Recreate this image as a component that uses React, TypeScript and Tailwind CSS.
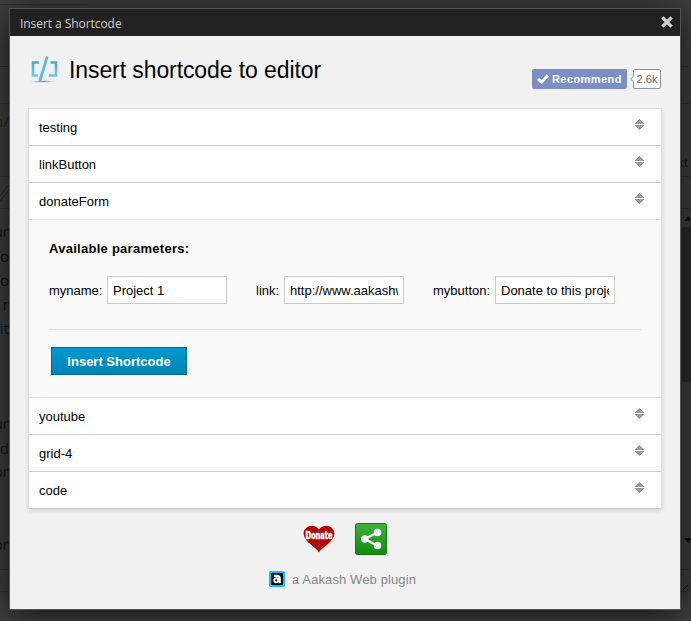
import React from "react";

const SANS = "font-['Liberation_Sans',Arial,sans-serif]";

function SortIcon() {
  return (
    <svg width="9" height="11" viewBox="0 0 9 11" className="mt-[10px] mr-[17px]" fill="#999" shapeRendering="crispEdges">
      <path d="M4 0h1v1h1v1h1v1h1v1h1v1H0V4h1V3h1V2h1V1h1zM0 6h9v1H8v1H7v1H6v1H5v1H4v-1H3V9H2V8H1V7H0z" />
    </svg>
  );
}

function Row({ name, open }: { name: string; open?: boolean }) {
  return (
    <div className={`flex h-[37px] items-start justify-between border-b bg-white pl-[10px] ${open ? "border-[#dfdfdf]" : "border-[#ccc]"}`}>
      <span className="text-[13px] leading-[37px] text-black">{name}</span>
      <SortIcon />
    </div>
  );
}

function Field({ label, value, labelWidth }: { label: string; value: string; labelWidth: string }) {
  return (
    <label className="flex items-center text-[13px] text-black">
      <span className={`${labelWidth} pt-[2px] whitespace-nowrap`}>{label}</span>
      <input readOnly value={value} className="h-7 w-[120px] border border-[#ccc] bg-white px-[5px] text-[13px] text-black outline-none" />
    </label>
  );
}

const LEFT_WORDS = [
  { text: "n/", top: "top-[109px]", color: "text-[#29240f]" },
  { text: "ur", top: "top-[219px]", color: "text-[#141414]" },
  { text: "o", top: "top-[244px]", color: "text-[#141414]" },
  { text: "do", top: "top-[268px]", color: "text-[#141414]" },
  { text: "r", top: "top-[292px]", color: "text-[#141414]" },
  { text: "it", top: "top-[316px]", color: "text-[#0d1c29]" },
  { text: "ur", top: "top-[411px]", color: "text-[#141414]" },
  { text: "d", top: "top-[436px]", color: "text-[#0d1c29]" },
  { text: "or", top: "top-[459px]", color: "text-[#141414]" },
  { text: "or", top: "top-[532px]", color: "text-[#141414]" },
];

function Backdrop() {
  return (
    <div className="absolute inset-0 overflow-hidden bg-[#3f3f3f] font-['Open_Sans',sans-serif]">
      <div className="absolute top-[4px] left-0 h-px w-[87px] bg-[#333]" />
      <div className="absolute top-[66px] left-0 h-px w-full bg-[#2f2f2f]" />
      <div className="absolute top-[103px] left-0 h-px w-full bg-[#2f2f2f]" />
      <div className="absolute top-[176px] left-0 h-[33px] w-full border-y border-[#2f2f2f]" />
      <div className="absolute top-[569px] left-0 h-[23px] w-full border-y border-[#333]" />
      <svg className="absolute top-[184px] left-0" width="10" height="18" stroke="#282828" fill="none"><path d="M0 12 7 3q2-2 3 0M0 17 9 6" /></svg>
      {LEFT_WORDS.map((w, i) => (
        <span key={i} className={`absolute right-[682px] text-[15px] leading-6 ${w.top} ${w.color}`}>{w.text}</span>
      ))}
      <span className="absolute top-[150px] left-[677px] text-[13px] leading-6 text-[#141414]">xt</span>
      <div className="absolute top-[227px] right-0 h-[155px] w-[9px] bg-[#2a2a2a]" />
      <svg className="absolute top-[216px] left-[684px]" width="8" height="5" fill="#111"><path d="M0 5 4 0l4 5z" /></svg>
      <svg className="absolute top-[538px] left-[684px]" width="8" height="5" fill="#050505"><path d="M0 0h8L4 5z" /></svg>
      <svg className="absolute top-[582px] left-[683px]" width="8" height="9" stroke="#202020" fill="none"><path d="M0 8 8 0M4 8l4-4" /></svg>
    </div>
  );
}

function Header() {
  return (
    <div className="flex h-[27px] items-center justify-between bg-[#222] pr-[7px] pl-[10px]">
      <span className="pt-[2px] font-['Open_Sans',sans-serif] text-[12px] leading-[27px] tracking-[-0.06px] text-[#cfcfcf]">Insert a Shortcode</span>
      <svg width="12" height="12" viewBox="0 0 12 12" stroke="#cfcfcf" strokeWidth="3.4" className="-mt-px">
        <path d="M1.4 1.4 10.6 10.6M10.6 1.4 1.4 10.6" />
      </svg>
    </div>
  );
}

function BracketLogo() {
  return (
    <svg width="30" height="30" viewBox="0 0 30 30" fill="none" className="ml-px">
      <defs>
        <linearGradient id="bracket" x1="0" y1="0" x2="0" y2="1">
          <stop offset="0" stopColor="#49a9d6" />
          <stop offset="1" stopColor="#6ac5ef" />
        </linearGradient>
        <radialGradient id="ground">
          <stop offset="0" stopColor="#888" />
          <stop offset="1" stopColor="#888" stopOpacity="0" />
        </radialGradient>
      </defs>
      <ellipse cx="14" cy="26.5" rx="13" ry="1.300" fill="url(#ground)" />
      <path d="M9.800 7.500H4V20.500H8.800M21.500 7.500h5.500V20.500H20" stroke="url(#bracket)" strokeWidth="2.600" />
      <path d="M18.300 1.500 10.800 26" stroke="#5bb9e4" strokeWidth="2.700" />
    </svg>
  );
}

function Recommend() {
  return (
    <div className="mt-[33px] flex h-5 items-center">
      <div className="flex h-5 w-[95px] items-center rounded-[2px] bg-[#7b8ec6] pl-[5px]">
        <svg width="12" height="10" viewBox="0 0 12 10" fill="none" stroke="#fff" strokeWidth="3"><path d="M1 5 4.500 8.200 11 1.300" /></svg>
        <span className="ml-[3px] text-[11px] font-bold tracking-[0.42px] text-white">Recommend</span>
      </div>
      <svg width="4" height="8" viewBox="0 0 4 8" fill="#fff" stroke="#8790ad" className="relative left-px ml-[2px]"><path d="M4 .5.7 4 4 7.500" /></svg>
      <div className="flex h-5 w-7 items-center justify-center rounded-[2px] border border-[#8790ad] bg-white text-[11px] text-[#666]">2.6k</div>
    </div>
  );
}

function Parameters() {
  return (
    <div className="h-[178px] border-b border-[#dfdfdf] bg-[#f9f9f9] px-5">
      <h4 className="pt-[19px] text-[13px] leading-[20px] font-bold tracking-[0.27px] text-black">Available parameters:</h4>
      <div className="mt-[17px] flex gap-[29px]">
        <Field label="myname:" value="Project 1" labelWidth="w-[58px]" />
        <Field label="link:" value="http://www.aakashweb.com" labelWidth="w-[28px]" />
        <Field label="mybutton:" value="Donate to this project" labelWidth="w-[62px]" />
      </div>
      <div className="mt-[25px] h-px bg-[#dfdfdf]" />
      <button className="mt-[17px] ml-[2px] flex h-7 w-[136px] items-center justify-center border border-[#00698c] bg-linear-to-b from-[#0099cf] to-[#0085b5] pt-[2px] text-[13px] font-bold whitespace-nowrap text-white">
        Insert Shortcode
      </button>
    </div>
  );
}

function Footer() {
  return (
    <div className="mt-[14px] flex flex-col items-center">
      <div className="flex h-8 items-center gap-5">
        <svg width="32" height="28" viewBox="0 0 32 28">
          <path d="M16 27.500C13.500 22 1 17.500.5 8.500 1 .5 11.500-2 16 4.500 20.500-2 31 .5 31.500 8.500 31 17.500 18.500 22 16 27.500z" fill="#b40808" />
          <text x="16" y="13.500" textAnchor="middle" textLength="27" lengthAdjust="spacingAndGlyphs" fontFamily="'DejaVu Sans Condensed','DejaVu Sans',sans-serif" fontWeight="bold" fontSize="10" fill="#fff" stroke="#fff" strokeWidth=".4">Donate</text>
        </svg>
        <svg width="32" height="32" viewBox="0 0 32 32">
          <defs>
            <linearGradient id="share" x1="0" y1="0" x2="0" y2="1">
              <stop offset="0" stopColor="#3fb23a" />
              <stop offset="1" stopColor="#118a12" />
            </linearGradient>
          </defs>
          <rect x=".5" y=".5" width="31" height="31" rx="2" fill="url(#share)" stroke="#0d7d10" />
          <path d="M22.500 9.500 9.500 16l13 6.500" fill="none" stroke="#f4f4f4" strokeWidth="2.500" />
          <g fill="#f4f4f4"><circle cx="22.500" cy="9.500" r="3.800" /><circle cx="9.800" cy="16" r="3.800" /><circle cx="22.500" cy="22.500" r="3.800" /></g>
        </svg>
      </div>
      <div className="mt-4 mr-[5px] flex h-4 items-center">
        <svg width="16" height="16" viewBox="0 0 16 16">
          <rect width="16" height="16" rx="2" fill="#09c3fa" />
          <rect x="2" y="2" width="12" height="12" rx="1" fill="#000" />
          <path d="M4.800 4.900H8Q10.800 4.900 10.800 7.700V12.200" fill="none" stroke="#fff" strokeWidth="2.100" />
          <circle cx="7.300" cy="9.300" r="2.100" fill="none" stroke="#fff" strokeWidth="1.900" />
        </svg>
        <span className="ml-[7px] pt-[2px] text-[13px] leading-4 tracking-[0.11px] whitespace-nowrap text-[#888]">a Aakash Web plugin</span>
      </div>
    </div>
  );
}

export default function App() {
  return (
    <div className={`relative h-[621px] w-[691px] overflow-hidden pt-[8px] pl-[9px] ${SANS}`}>
      <Backdrop />
      <div className="relative h-[602px] w-[672px] border border-[#555] bg-[#f1f1f1] shadow-[0_4px_30px_rgba(0,0,0,0.7)]">
        <Header />
        <div className="px-[18px]">
          <div className="flex h-[72px] items-start justify-between pr-px">
            <div className="flex items-start pt-[19px]">
              <BracketLogo />
              <h1 className="ml-[10px] text-[23px] leading-[30px] tracking-[-0.09px] whitespace-nowrap text-black">Insert shortcode to editor</h1>
            </div>
            <Recommend />
          </div>
          <div className="border border-b-0 border-[#dfdfdf] shadow-[0_2px_4px_#00000022]">
            <Row name="testing" />
            <Row name="linkButton" />
            <Row name="donateForm" open />
            <Parameters />
            <Row name="youtube" />
            <Row name="grid-4" />
            <Row name="code" />
          </div>
          <Footer />
        </div>
      </div>
    </div>
  );
}
